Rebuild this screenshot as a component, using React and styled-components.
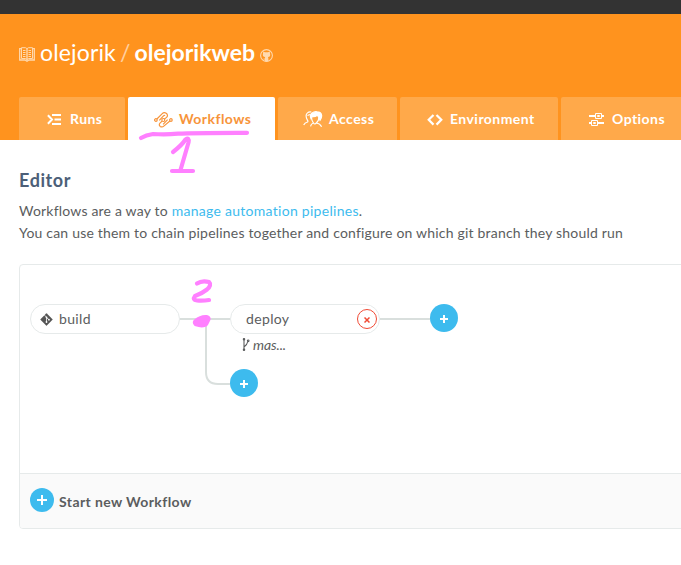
import React from "react";
import styled, { createGlobalStyle, css } from "styled-components";

const GlobalStyle = createGlobalStyle`
  * { box-sizing: border-box; }
  html, body { margin: 0; background: #fff; overflow: hidden; }
  body { font-family: Lato, sans-serif; font-size: 14px; color: #5b5d5e; letter-spacing: 0.3px; }
  svg { display: block; flex: none; }
`;

const Page = styled.div`
  position: relative;
  width: 681px;
  height: 565px;
  overflow: hidden;
`;

const TopBar = styled.div`
  height: 14px;
  background: #333;
`;

const Header = styled.header`
  display: flex;
  flex-direction: column;
  justify-content: space-between;
  height: 126px;
  padding: 21px 0 0 19px;
  background: #ff931e;
`;

const Title = styled.h1`
  display: flex;
  align-items: center;
  height: 34px;
  margin: 0;
  font-size: 23px;
  line-height: 34px;
  font-weight: 400;
  letter-spacing: 0.15px;
  color: #fff;
`;

const TitleIcon = styled.span`
  margin: ${(p) => p.$margin};
  color: #ffd9ae;
`;

const Slash = styled.span`
  margin: 0 4px;
  color: #ffd0a0;
`;

const RepoName = styled.b`
  font-weight: 700;
  letter-spacing: 0;
`;

const Tabs = styled.nav`
  display: flex;
  gap: 3px;
`;

const Tab = styled.a`
  display: flex;
  flex: none;
  align-items: center;
  width: ${(p) => p.$width}px;
  height: 43px;
  padding: 0 0 0 ${(p) => p.$inset}px;
  border-radius: 2px 2px 0 0;
  background: ${(p) => (p.$active ? "#fff" : "#ffa94a")};
  color: ${(p) => (p.$active ? "#f7943a" : "#fff")};
  font-weight: 700;
  letter-spacing: 0.45px;
`;

const TabIcon = styled.span`
  width: ${(p) => p.$width}px;
  flex: none;
  padding-top: 2px;
`;

const Main = styled.main`
  padding: 27px 0 0 19px;
`;

const Heading = styled.h2`
  margin: 0 0 6px;
  font-size: 18px;
  line-height: 27px;
  font-weight: 700;
  letter-spacing: 0.6px;
  color: #4c5f78;
`;

const Intro = styled.p`
  margin: 0 0 20px;
  line-height: 22px;
  letter-spacing: 0.195px;
  white-space: nowrap;
`;

const Link = styled.a`
  color: #3dbbee;
  letter-spacing: 0.28px;
`;

const Panel = styled.section`
  width: 700px;
  height: 265px;
  border: 1px solid #e6eaea;
  border-radius: 4px;
  overflow: hidden;
`;

const Canvas = styled.div`
  position: relative;
  height: 208px;
`;

const Connectors = styled.svg`
  position: absolute;
  inset: 0;
`;

const placed = css`
  position: absolute;
  left: ${(p) => p.$x}px;
  top: ${(p) => p.$y}px;
`;

const Node = styled.div`
  ${placed}
  display: flex;
  align-items: center;
  width: 150px;
  height: 30px;
  padding: 0 2px 0 ${(p) => p.$inset}px;
  gap: 6px;
  border: 1px solid #e6eaea;
  border-radius: 15px;
  background: #fff;
  letter-spacing: 0.35px;
`;

const NodeLabel = styled.span`
  padding-bottom: 2px;
`;

const AddButton = styled.button`
  ${(p) => p.$x !== undefined && placed}
  display: flex;
  flex: none;
  align-items: center;
  justify-content: center;
  width: ${(p) => p.$size}px;
  height: ${(p) => p.$size}px;
  padding: ${(p) => p.$nudge || 0}px 0 0;
  border: 0;
  border-radius: 50%;
  background: #3dbbee;
  color: #fff;
`;

const RemoveButton = styled.button`
  display: flex;
  align-items: center;
  justify-content: center;
  width: 20px;
  height: 20px;
  margin-left: auto;
  padding: 1px 0 0;
  border: 1px solid #f04a35;
  border-radius: 50%;
  background: #fff;
  color: #f04a35;
`;

const Branch = styled.div`
  ${placed}
  display: flex;
  align-items: center;
  gap: 3px;
  height: 18px;
  font-style: italic;
  letter-spacing: -0.1px;
`;

const PanelFooter = styled.footer`
  display: flex;
  align-items: flex-start;
  gap: 5px;
  height: 56px;
  padding: 14px 10px;
  border-top: 1px solid #e6eaea;
  background: #fafafa;
  font-weight: 700;
  letter-spacing: 0.4px;
`;

const FooterLabel = styled.span`
  line-height: 20px;
  margin-top: 4px;
`;

const Annotation = styled.svg`
  position: absolute;
  inset: 0;
  pointer-events: none;
`;

const stroke = { fill: "none", stroke: "currentColor" };

const BookIcon = () => (
  <svg width="16" height="15" viewBox="0 0 16 15" {...stroke} strokeWidth="1">
    <path strokeWidth="1.3" d="M2.500 1.600H.7v11.400h5.300l2 1.200 2-1.200h5.300V1.600h-1.800" />
    <path d="M2.500.7h4L8 1.700 9.500.7h4v10.800h-4L8 12.500l-1.500-1h-4z" />
    <path strokeWidth="1.400" d="M8 1.800v11.800" />
    <path d="M4 3.500h2.500M4 5.500h2.500M4 7.500h2.500M4 9.500h2.500M9.500 3.500H12M9.500 5.500H12M9.500 7.500H12M9.500 9.500H12" />
  </svg>
);

const GithubIcon = () => (
  <svg width="13" height="13" viewBox="0 0 13 13">
    <circle cx="6.5" cy="6.5" r="5.900" {...stroke} strokeWidth="1.100" />
    <path fill="currentColor" d="M3.200 2.400 5 3.300q1.500-.3 3 0l1.800-.9.2 2q1 3.100-2 3.700.5.600.4 3.800Q6.500 12.600 4.800 11.900V10.500Q3.500 10.700 3 9.200q1 .8 1.800.4L5.100 8.100Q2.100 7.500 3 4.400z" />
  </svg>
);

const RunsIcon = () => (
  <svg width="15" height="12" viewBox="0 0 15 12" {...stroke} strokeWidth="2">
    <path d="M.9 1.200 5 5.500.9 9.800M5 1h9M7.500 5.500H14M5 10h9" />
  </svg>
);

const WorkflowIcon = () => (
  <svg width="19" height="16" viewBox="0 0 19 16" {...stroke} strokeWidth="1.200">
    <circle cx="1.900" cy="8" r="1.300" />
    <circle cx="9.300" cy="8" r="1.500" />
    <circle cx="16.900" cy="8" r="1.300" />
    <path d="M2.900 7 8 1.900q2-2 4.200-.6 2.300 1.800.4 4.100L10.400 7M8.100 9.100 6 11.200q-1.500 1.700.2 3.200 1.900 1.300 3.900-.5L15.900 9M5.300 8.300 9.500 3.800q.9-.9 1.600-.2M9.100 12.300 13.600 7.700" />
  </svg>
);

const AccessIcon = () => (
  <svg width="20" height="17" viewBox="0 0 20 17" {...stroke} strokeWidth="1.200">
    <path d="M7.500 15.300Q8 12.800 10.400 12 8.500 9.500 8.400 6M15.900 6q.1 4-2.600 6 3.700.5 5.300 3.800M10.400 12q1.500 2 2.900 0M.7 13.900Q1.700 11.700 4.500 11q.9-.8-.2-2Q1.800 4 4.500 1.900 6 .5 8.300 1" />
    <path fill="currentColor" d="M8 7.500Q6.500 4 8.700 2.200 11.500.2 14 .8q4.200.1 4.600 3.500.3 2.500-1.600 5L15.800 6 14.300 4.200Q12 6 9.200 5.600z" />
    <path d="m4.500 4.500 2.500-1" />
  </svg>
);

const CodeIcon = () => (
  <svg width="16" height="12" viewBox="0 0 16 12" {...stroke} strokeWidth="2.200">
    <path d="M6.500 1 1.700 5.800l4.800 4.800M9.500 1l4.800 4.800-4.800 4.800" />
  </svg>
);

const OptionsIcon = () => (
  <svg width="16" height="14" viewBox="0 0 16 14" {...stroke}>
    <path strokeWidth="2" d="M0 3h6M13 3h2M0 10h2M9 10h6" />
    <path strokeWidth="1" d="M6.500.5h6v5h-6zM2.500 7.500h6v5h-6zM8.500 2.500h2v1h-2zM4.500 9.500h2v1h-2z" />
  </svg>
);

const GitIcon = () => (
  <svg width="13" height="13" viewBox="0 0 13 13">
    <rect x="2" y="2" width="9" height="9" rx=".5" transform="rotate(45 6.500 6.500)" fill="#555" />
    <path d="m4.500 2.200 2 2v5M6.500 4.500 9 6.800" fill="none" stroke="#fff" strokeWidth=".8" />
    <circle cx="6.500" cy="4.300" r=".9" fill="#fff" />
    <circle cx="6.500" cy="9" r=".9" fill="#fff" />
    <circle cx="8.900" cy="6.700" r=".9" fill="#fff" />
  </svg>
);

const BranchIcon = () => (
  <svg width="8" height="13" viewBox="0 0 8 13" {...stroke} strokeWidth="1.100">
    <path d="M2 1.500v10M2 9Q5.300 6.500 5.800 3.500" />
    <circle cx="2" cy="1.200" r=".7" />
    <circle cx="2" cy="11.800" r=".7" />
    <circle cx="6.200" cy="2.800" r=".8" />
  </svg>
);

const PlusIcon = ({ size = 8, weight = 2 }) => (
  <svg width={size} height={size} viewBox={`0 0 ${size} ${size}`} {...stroke} strokeWidth={weight}>
    <path d={`M${size / 2} 0V${size}M0 ${size / 2}H${size}`} />
  </svg>
);

const CloseIcon = () => (
  <svg width="6" height="6" viewBox="0 0 6 6" {...stroke} strokeWidth="1.500">
    <path d="m.5.5 5 5m0-5-5 5" />
  </svg>
);

const tabs = [
  { label: "Runs", icon: RunsIcon, width: 106, inset: 28, iconWidth: 23 },
  { label: "Workflows", icon: WorkflowIcon, width: 147, inset: 26, iconWidth: 25, active: true },
  { label: "Access", icon: AccessIcon, width: 119, inset: 25, iconWidth: 26 },
  { label: "Environment", icon: CodeIcon, width: 158, inset: 27, iconWidth: 23 },
  { label: "Options", icon: OptionsIcon, width: 140, inset: 28, iconWidth: 23 },
];

export default function App() {
  return (
    <Page>
      <GlobalStyle />
      <TopBar />
      <Header>
        <Title>
          <TitleIcon $margin="5px 5px 0 0"><BookIcon /></TitleIcon>
          <span>olejorik</span>
          <Slash>/</Slash>
          <RepoName>olejorikweb</RepoName>
          <TitleIcon $margin="7px 0 0 5px"><GithubIcon /></TitleIcon>
        </Title>
        <Tabs>
          {tabs.map(({ label, icon: Icon, width, inset, iconWidth, active }) => (
            <Tab key={label} $width={width} $inset={inset} $active={active}>
              <TabIcon $width={iconWidth}><Icon /></TabIcon>
              {label}
            </Tab>
          ))}
        </Tabs>
      </Header>
      <Main>
        <Heading>Editor</Heading>
        <Intro>
          Workflows are a way to <Link>manage automation pipelines</Link>.<br />
          You can use them to chain pipelines together and configure on which git branch they should run
        </Intro>
        <Panel>
          <Canvas>
            <Connectors width="680" height="208" fill="none" stroke="#d9dfdd" strokeWidth="2">
              <path d="M160 54h50M360 54h50M186 54v53q0 12 12 12h12" />
            </Connectors>
            <Node $x={10} $y={39} $inset={9}><GitIcon /><NodeLabel>build</NodeLabel></Node>
            <Node $x={210} $y={39} $inset={15}>
              <NodeLabel>deploy</NodeLabel>
              <RemoveButton aria-label="Remove deploy"><CloseIcon /></RemoveButton>
            </Node>
            <Branch $x={222} $y={70}><BranchIcon />mas...</Branch>
            <AddButton $x={410} $y={39} $size={28} $nudge={2} aria-label="Add pipeline"><PlusIcon /></AddButton>
            <AddButton $x={210} $y={104} $size={28} $nudge={2} aria-label="Add pipeline"><PlusIcon /></AddButton>
          </Canvas>
          <PanelFooter>
            <AddButton $size={24} aria-label="Start workflow"><PlusIcon size={10} /></AddButton>
            <FooterLabel>Start new Workflow</FooterLabel>
          </PanelFooter>
        </Panel>
      </Main>
      <Annotation width="681" height="565" fill="none" stroke="#ff80ff" strokeWidth="4.200" strokeLinecap="round" strokeLinejoin="round">
        <path d="M141 138q5-3 12-4 12 1 25-.3 16-1 69-.9" />
        <path d="M173 152q9-7 12.500-12.500 4-2.500 3 3L180.500 170M172 171h21" />
        <path d="M197 283.500q5-3.500 12-1.500 3 3-2 7.500-5 4-12 6.500-3 4 2 4.500 6 .5 12-.500" />
        <path strokeWidth="8" d="M197 322.500q4 1.500 7.500.5l2-4q-5-.5-9.500 3.500z" />
      </Annotation>
    </Page>
  );
}
